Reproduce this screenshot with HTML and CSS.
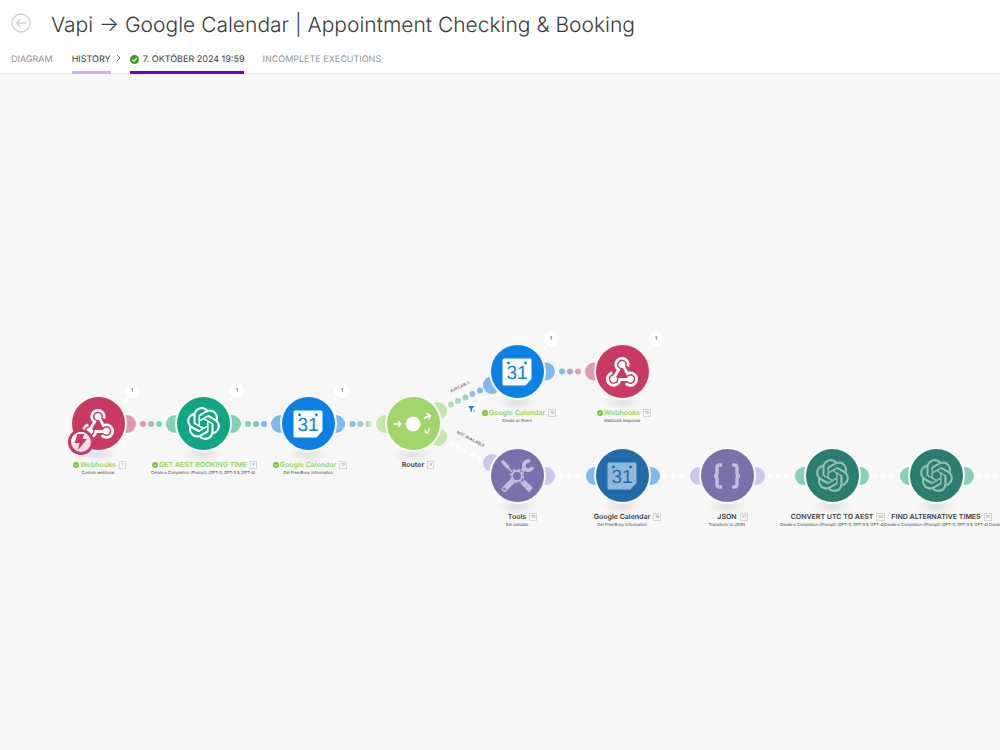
FILE: index.html
```html
<!DOCTYPE html>
<html lang="sk">
<head>
<meta charset="utf-8">
<title>Vapi → Google Calendar | Appointment Checking &amp; Booking</title>
<link rel="stylesheet" href="styles.css">
</head>
<body>
<svg class="defs" aria-hidden="true">
  <defs>
    <symbol id="gpt" viewBox="0 0 24 24"><path fill="currentColor" d="M22.2819 9.8211a5.9847 5.9847 0 0 0-.5157-4.9108 6.0462 6.0462 0 0 0-6.5098-2.9A6.0651 6.0651 0 0 0 4.9807 4.1818a5.9847 5.9847 0 0 0-3.9977 2.9 6.0462 6.0462 0 0 0 .7427 7.0966 5.98 5.98 0 0 0 .511 4.9107 6.051 6.051 0 0 0 6.5146 2.9001A5.9847 5.9847 0 0 0 13.2599 24a6.0557 6.0557 0 0 0 5.7718-4.2058 5.9894 5.9894 0 0 0 3.9977-2.9001 6.0557 6.0557 0 0 0-.7475-7.0729zm-9.022 12.6081a4.4755 4.4755 0 0 1-2.8764-1.0408l.1419-.0804 4.7783-2.7582a.7948.7948 0 0 0 .3927-.6813v-6.7369l2.02 1.1686a.071.071 0 0 1 .038.052v5.5826a4.504 4.504 0 0 1-4.4945 4.4944zm-9.6607-4.1254a4.4708 4.4708 0 0 1-.5346-3.0137l.142.0852 4.783 2.7582a.7712.7712 0 0 0 .7806 0l5.8428-3.3685v2.3324a.0804.0804 0 0 1-.0332.0615L9.74 19.9502a4.4992 4.4992 0 0 1-6.1408-1.6464zM2.3408 7.8956a4.485 4.485 0 0 1 2.3655-1.9728V11.6a.7664.7664 0 0 0 .3879.6765l5.8144 3.3543-2.0201 1.1685a.0757.0757 0 0 1-.071 0l-4.8303-2.7865A4.504 4.504 0 0 1 2.3408 7.872zm16.5963 3.8558L13.1038 8.364 15.1192 7.2a.0757.0757 0 0 1 .071 0l4.8303 2.7913a4.4944 4.4944 0 0 1-.6765 8.1042v-5.6772a.79.79 0 0 0-.407-.667zm2.0107-3.0231l-.142-.0852-4.7735-2.7818a.7759.7759 0 0 0-.7854 0L9.409 9.2297V6.8974a.0662.0662 0 0 1 .0284-.0615l4.8303-2.7866a4.4992 4.4992 0 0 1 6.6802 4.66zM8.3065 12.863l-2.02-1.1638a.0804.0804 0 0 1-.038-.0567V6.0742a4.4992 4.4992 0 0 1 7.3757-3.4537l-.142.0805L8.704 5.459a.7948.7948 0 0 0-.3927.6813zm1.0976-2.3654l2.602-1.4998 2.6069 1.4998v2.9994l-2.5974 1.4997-2.6067-1.4997Z"/></symbol>
    <g id="hook-arm"><path d="M-8.600 6.900L-3.200-2.100A5.900 5.900 0 1 1 5.600-5.200" fill="none" stroke="currentColor" stroke-width="2.700"/><circle cx="0" cy="-7" r="3.200" fill="currentColor"/></g>
    <symbol id="hook" viewBox="-18 -18 36 36"><use href="#hook-arm"/><use href="#hook-arm" transform="rotate(120 0 2.1)"/><use href="#hook-arm" transform="rotate(240 0 2.1)"/></symbol>
    <symbol id="cal" viewBox="0 0 36 36"><path fill="currentColor" d="M5 4.500h26q1.500 0 1.500 1.500v19l-6 6.500H5q-1.500 0-1.500-1.500V6q0-1.500 1.500-1.500z"/><circle cx="9.500" cy="9" r="1.400" class="hole"/><circle cx="26.500" cy="9" r="1.400" class="hole"/><text x="18" y="25" text-anchor="middle" class="day">31</text></symbol>
    <symbol id="check" viewBox="0 0 10 10"><circle cx="5" cy="5" r="5" fill="currentColor"/><path d="M2.600 5.200l1.800 1.700 3-3.300" fill="none" stroke="#fff" stroke-width="1.300"/></symbol>
  </defs>
</svg>

<header class="header">
  <div class="heading">
    <button class="back" aria-label="Back"><svg viewBox="0 0 20 20"><circle cx="10" cy="10" r="9"/><path d="M15 10H5.500M9.500 6l-4 4 4 4"/></svg></button>
    <h1>Vapi → Google Calendar | Appointment Checking &amp; Booking</h1>
  </div>
  <nav class="tabs">
    <a href="#diagram" class="tab">DIAGRAM</a>
    <a href="#history" class="tab history">HISTORY</a>
    <svg class="chevron" viewBox="0 0 5 8"><path d="M1 1l3 3-3 3"/></svg>
    <a href="#run" class="tab run"><svg><use href="#check"/></svg>7. OKTÓBER 2024 19:59</a>
    <a href="#incomplete" class="tab">INCOMPLETE EXECUTIONS</a>
  </nav>
</header>

<main class="canvas">
  <svg class="links" viewBox="0 74 1060 676" width="1060" height="676" aria-hidden="true">
    <g class="dots" stroke="#fff">
      <path d="M451 444L491 464M561 476h24M665 476h24M770 476h24M875 476h24M979 476h24"/>
    </g>
    <g fill="#e298b3"><circle cx="127" cy="424" r="9"/><circle cx="594" cy="371.500" r="9"/><circle cx="143" cy="424" r="3"/><circle cx="578" cy="371.500" r="3"/></g>
    <g fill="#85d0b7"><circle cx="175" cy="424" r="9"/><circle cx="232" cy="424" r="9"/><circle cx="159" cy="424" r="3"/><circle cx="248" cy="424" r="3"/><circle cx="804" cy="476" r="9"/><circle cx="860" cy="476" r="9"/><circle cx="909" cy="476" r="9"/><circle cx="965" cy="476" r="9"/></g>
    <g fill="#7fb9ed"><circle cx="280" cy="424" r="9"/><circle cx="336" cy="424" r="9"/><circle cx="264" cy="424" r="3"/><circle cx="352.500" cy="424" r="3"/><circle cx="492" cy="385" r="9"/><circle cx="546" cy="371.500" r="9"/><circle cx="562" cy="371.500" r="3"/><circle cx="480" cy="390.500" r="3"/><circle cx="595" cy="476" r="9"/><circle cx="651" cy="476" r="9"/></g>
    <g fill="#c7e6ad"><circle cx="385" cy="424" r="9"/><circle cx="438" cy="411" r="9"/><circle cx="438" cy="437" r="9"/></g>
    <g fill="#cfc5f0"><circle cx="492" cy="463" r="9"/><circle cx="546" cy="476" r="9"/><circle cx="699" cy="476" r="9"/><circle cx="756" cy="476" r="9"/></g>
    <circle cx="151" cy="424" r="3" fill="#b5b5ba"/>
    <circle cx="256" cy="424" r="3" fill="#82c5d0"/>
    <circle cx="360.500" cy="424" r="3" fill="#a0ced0"/>
    <circle cx="368.500" cy="424" r="3" fill="#b7ddb8"/>
    <circle cx="570" cy="371.500" r="3" fill="#b0a6d0"/>
    <circle cx="451" cy="404.500" r="3" fill="#b4dcb4"/>
    <circle cx="458" cy="401" r="3" fill="#a8d6bd"/>
    <circle cx="465.500" cy="397.500" r="3" fill="#9bcec9"/>
    <circle cx="472.500" cy="394" r="3" fill="#90c5d8"/>
    <circle cx="472" cy="409" r="7" fill="#fff"/>
    <path d="M468 406h6.500l-2.500 3v3l-1.500-1v-2z" fill="#168ac0"/>
    <text x="473" y="413" class="count">1</text>
    <text class="route" transform="translate(460.500 388) rotate(-25)">AVAILABLE</text>
    <text class="route" transform="translate(470 440) rotate(27)">NOT AVAILABLE</text>
  </svg>

  <section class="node row-mid c1 done pink">
    <div class="disc"><svg><use href="#hook"/></svg></div>
    <svg class="instant" viewBox="-13 -13 26 26"><circle r="13" fill="#c83a63"/><circle r="10" fill="#f6dfe7"/><path d="M-10 0A10 10 0 0 1 5-8.600L0-1z" fill="#fff"/><path d="M-3.500-8h7L1.500-3H6L-3 8l1.500-7h-5z" fill="#c83a63"/></svg>
    <span class="bubble">1</span>
    <h2><svg><use href="#check"/></svg>Webhooks<small>1</small></h2><p>Custom webhook</p>
  </section>
  <section class="node row-mid c2 done teal">
    <div class="disc"><svg><use href="#gpt"/></svg></div><span class="bubble">1</span>
    <h2><svg><use href="#check"/></svg>GET AEST BOOKING TIME<small>3</small></h2><p>Create a Completion (Prompt) (GPT-3, GPT-3.5, GPT-4)</p>
  </section>
  <section class="node row-mid c3 done blue">
    <div class="disc"><svg><use href="#cal"/></svg></div><span class="bubble">1</span>
    <h2><svg><use href="#check"/></svg>Google Calendar<small>12</small></h2><p>Get Free/Busy Information</p>
  </section>
  <section class="node row-mid c4 green">
    <div class="disc"><svg class="router" viewBox="-20 -20 40 40"><circle r="7.500" fill="#fff" stroke="none"/><path d="M-19 0h7M-15-3l3 3-3 3M11-5q2-3 6-3M13.500-10.500l4 2-2 4M16 4q1 4-3.500 4.500M12 5.500l.5 3 3 1"/></svg></div>
    <h2>Router<small>5</small></h2>
  </section>
  <section class="node row-top c5 done blue">
    <div class="disc"><svg><use href="#cal"/></svg></div><span class="bubble">1</span>
    <h2><svg><use href="#check"/></svg>Google Calendar<small>10</small></h2><p>Create an Event</p>
  </section>
  <section class="node row-top c6 done pink">
    <div class="disc"><svg><use href="#hook"/></svg></div><span class="bubble">1</span>
    <h2><svg><use href="#check"/></svg>Webhooks<small>19</small></h2><p>Webhook response</p>
  </section>
  <section class="node row-low c5 violet">
    <div class="disc"><svg viewBox="-18 -18 36 36"><g fill="none" stroke="currentColor"><path d="M-14-14l4.500 5" stroke-width="3.500" stroke-linecap="round"/><path d="M-10-9.500l5 5.500" stroke-width="1.500"/><path d="M5-5l4-4" stroke-width="4"/><path d="M13-14.500a4.500 4.500 0 1 0 2.500 5.500" stroke-width="3.800"/><path d="M-5.500 6l-7 7" stroke-width="5.500" stroke-linecap="round"/><path d="M5.500 5.500l8.500 8.500" stroke-width="6"/><circle r="5" stroke-width="1.800"/><circle r="6.500" stroke-width="1.500" stroke-dasharray="2.500 2.600"/></g><circle cx="-12.500" cy="13" r="1.300" fill="#7b70a9"/></svg></div>
    <h2>Tools<small>15</small></h2><p>Set variable</p>
  </section>
  <section class="node row-low c6 navy">
    <div class="disc"><svg><use href="#cal"/></svg></div>
    <h2>Google Calendar<small>16</small></h2><p>Get Free/Busy Information</p>
  </section>
  <section class="node row-low c7 violet">
    <div class="disc"><svg viewBox="-18 -18 36 36"><path d="M-5-11h-3q-2 0-2 3v5q0 3-3 3 3 0 3 3v5q0 3 2 3h3M5-11h3q2 0 2 3v5q0 3 3 3-3 0-3 3v5q0 3-2 3H5" fill="none" stroke="currentColor" stroke-width="3.500"/></svg></div>
    <h2>JSON<small>37</small></h2><p>Transform to JSON</p>
  </section>
  <section class="node row-low c8 pine">
    <div class="disc"><svg><use href="#gpt"/></svg></div>
    <h2>CONVERT UTC TO AEST<small>40</small></h2><p>Create a Completion (Prompt) (GPT-3, GPT-3.5, GPT-4)</p>
  </section>
  <section class="node row-low c9 pine">
    <div class="disc"><svg><use href="#gpt"/></svg></div>
    <h2>FIND ALTERNATIVE TIMES<small>21</small></h2><p>Create a Completion (Prompt) (GPT-3, GPT-3.5, GPT-4)</p>
  </section>
  <section class="node row-low c10 pine">
    <div class="disc"><svg><use href="#gpt"/></svg></div>
    <h2></h2><p>Create a Completion (Prompt) (GPT-3, GPT-3.5, GPT-4)</p>
  </section>
</main>
</body>
</html>
```

FILE: styles.css
```css
* { box-sizing: border-box; }
body {
  margin: 0;
  min-height: 100vh;
  display: flex;
  flex-direction: column;
  overflow: hidden;
  font-family: Inter, "Liberation Sans", sans-serif;
  text-rendering: geometricPrecision;
  color: #3c3c3c;
  background: #fff;
}
.defs { position: absolute; width: 0; height: 0; }

.header { border-bottom: 1px solid #e8e8e8; }
.heading { display: flex; align-items: center; gap: 20px; height: 48px; padding: 0 11px; }
.back { width: 20px; height: 20px; padding: 0; border: 0; background: none; margin-bottom: 2px; }
.back svg { display: block; fill: none; stroke: #d2d2d2; stroke-width: 1.4; }
h1 { margin: 0; padding-top: 3px; font-size: 21px; line-height: 28px; font-weight: 300; white-space: nowrap; color: #3c3c3c; }

.tabs { display: flex; height: 25px; padding-left: 11px; }
.tab {
  display: flex;
  height: 26px;
  margin-right: 19px;
  padding-top: 6px;
  font-size: 9px;
  line-height: 12px;
  color: #949494;
  text-decoration: none;
  white-space: nowrap;
}
.tab.history { margin-right: 5px; color: #3c3c3c; border-bottom: 3px solid #cfb0ee; }
.tab.run { margin-right: 18px; color: #3c3c3c; border-bottom: 3px solid #6d00cc; }
.tab.run svg { width: 9px; height: 9px; margin: 1px 4px 0 0; color: #38a01c; }
.chevron { width: 5px; height: 8px; margin: 6px 9px 0 0; fill: none; stroke: #666; }

.canvas { position: relative; flex: 1; overflow: hidden; background: #f7f7f7; }
.links { position: absolute; left: 0; top: 0; }
.dots path { fill: none; stroke-width: 5; stroke-linecap: round; stroke-dasharray: 0 8; opacity: 0.6; }
.route { font-size: 4px; text-anchor: middle; fill: #444; }
.count { font-size: 4px; fill: #168ac0; }

/* Each node is anchored at the centre of its disc. */
.node {
  position: absolute;
  width: 130px;
  margin: -27px 0 0 -65px;
  display: flex;
  flex-direction: column;
  align-items: center;
}
.row-top { top: 298px; }
.row-mid { top: 350px; }
.row-low { top: 402px; }
.c1 { left: 98px; }
.c2 { left: 203px; }
.c3 { left: 308px; }
.c4 { left: 413px; }
.c5 { left: 517px; }
.c6 { left: 622px; }
.c7 { left: 727px; }
.c8 { left: 832px; }
.c9 { left: 936px; }
.c10 { left: 1041px; }

.node::before {
  content: "";
  position: absolute;
  top: 48px;
  width: 40px;
  height: 18px;
  background: radial-gradient(closest-side, #e0e0e0, #f7f7f7);
}
.disc {
  position: relative;
  display: grid;
  place-items: center;
  width: 53px;
  height: 53px;
  border-radius: 50%;
  background: var(--disc);
  color: var(--ink);
  box-shadow: 0 0 0 2px #f9f9f9;
}
.disc svg { width: 36px; height: 36px; }
.pink .disc svg { width: 38px; height: 38px; }
.teal .disc svg, .pine .disc svg { width: 33px; height: 33px; }
.disc .router { width: 40px; height: 40px; fill: none; stroke: #fff; stroke-width: 1.4; }
.pink { --disc: #c83a63; --ink: #fff; }
.teal { --disc: #11a683; --ink: #fff; }
.blue { --disc: #0b80e5; --ink: #fff; }
.green { --disc: #a0d56c; --ink: #fff; }
.violet { --disc: #7b70a9; --ink: #c3bddb; }
.navy { --disc: #236aa8; --ink: #91b9dc; }
.pine { --disc: #2a7d70; --ink: #92bfb6; }
.hole { fill: var(--disc); }
.day { font: 19px "Liberation Sans", sans-serif; fill: var(--disc); }

.instant { position: absolute; left: 35px; top: 32px; width: 26px; height: 26px; }
.bubble {
  position: absolute;
  left: 91px;
  top: -14px;
  width: 16px;
  height: 16px;
  border-radius: 50%;
  background: #fff;
  box-shadow: 0 0 1px #ddd;
  font-size: 5px;
  font-weight: 500;
  line-height: 16px;
  text-align: center;
}
.bubble::after {
  content: "";
  position: absolute;
  left: 0;
  top: 15px;
  width: 4px;
  height: 4px;
  border-radius: 50%;
  background: #fff;
}

.node h2 {
  position: relative;
  height: 8px;
  margin: 11px 0 0;
  font-size: 7px;
  line-height: 8px;
  font-weight: 600;
  white-space: nowrap;
}
.done h2 { color: #93d65e; }
.node h2 svg { position: absolute; right: 100%; top: 1px; width: 6px; height: 6px; margin-right: 1px; color: #74c63c; }
.node small {
  position: absolute;
  left: 100%;
  top: 0;
  min-width: 7px;
  margin-left: 3px;
  padding: 0 1px;
  border: 1px solid #d6d6d6;
  font-size: 4px;
  line-height: 6px;
  font-weight: 400;
  text-align: center;
  color: #999;
}
.node p { margin: 1px 0 0; font-size: 4px; line-height: 5px; white-space: nowrap; color: #444; }
```
